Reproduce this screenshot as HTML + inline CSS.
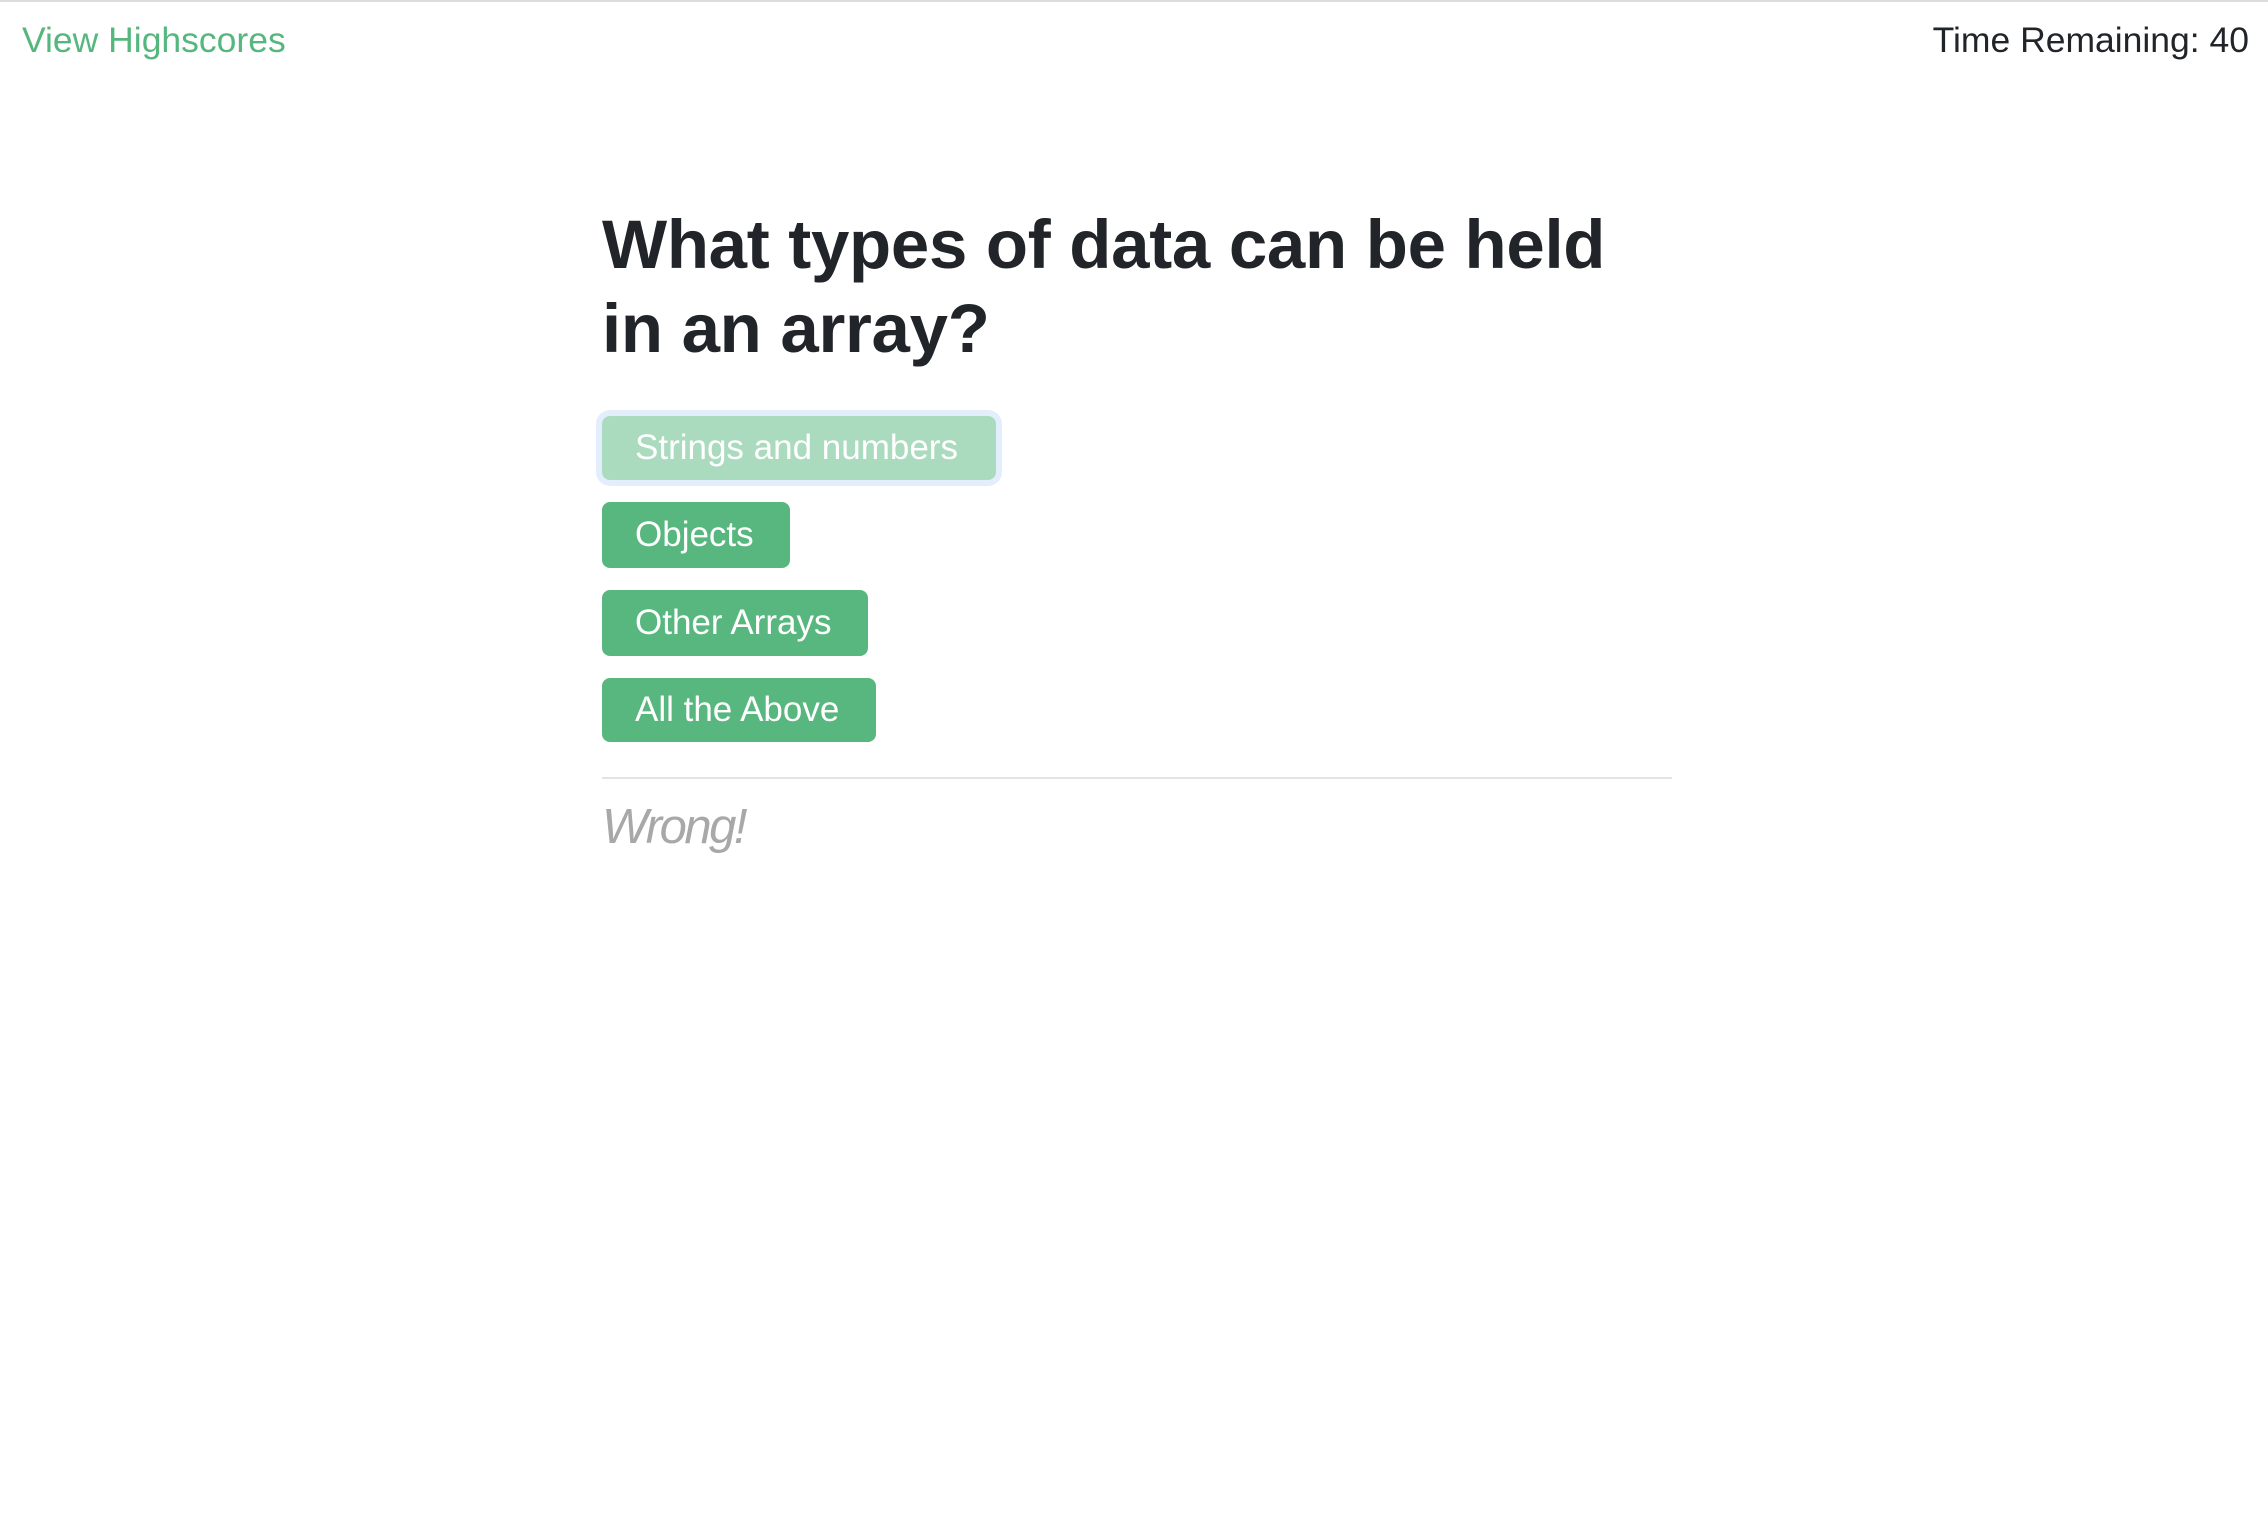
<!DOCTYPE html>
<html><head><meta charset="utf-8">
<style>
html,body{margin:0;padding:0;background:#fff;width:2268px;height:1528px;overflow:hidden;font-family:"Liberation Sans",sans-serif;}
.topline{position:absolute;left:0;top:0;width:2268px;height:2px;background:#dcdcdf;}
.hs{position:absolute;left:22px;top:16px;font-size:35.5px;color:#56b77e;line-height:48px;}
.time{position:absolute;right:19px;top:16px;font-size:35.5px;color:#212529;line-height:48px;}
h1{position:absolute;left:602px;top:203px;margin:0;font-size:69px;font-weight:bold;line-height:84px;color:#212529;letter-spacing:-0.3px;width:1200px;white-space:nowrap;}
.btn{position:absolute;left:602px;height:64px;background:#58b77f;color:#fff;border-radius:8px;font-size:35px;line-height:64px;padding:0 33px;box-sizing:border-box;white-space:nowrap;}
.b1{top:416px;width:394px;background:#aadbbe;box-shadow:0 0 0 6px #e3eefc;}
.b2{top:502px;width:188px;height:66px;line-height:66px;}
.b3{top:590px;width:266px;height:66px;line-height:66px;}
.b4{top:678px;width:274px;}
hr{position:absolute;left:602px;top:777px;width:1070px;margin:0;border:0;height:2px;background:#e3e3e3;}
.wrong{position:absolute;left:602px;top:799px;font-size:49px;font-style:italic;font-weight:300;color:#a8a8a8;letter-spacing:-2.5px;}
</style></head><body>
<div class="topline"></div>
<div class="hs">View Highscores</div>
<div class="time">Time Remaining: 40</div>
<h1>What types of data can be held<br>in an array?</h1>
<div class="btn b1">Strings and numbers</div>
<div class="btn b2">Objects</div>
<div class="btn b3">Other Arrays</div>
<div class="btn b4">All the Above</div>
<hr>
<div class="wrong">Wrong!</div>
</body></html>
